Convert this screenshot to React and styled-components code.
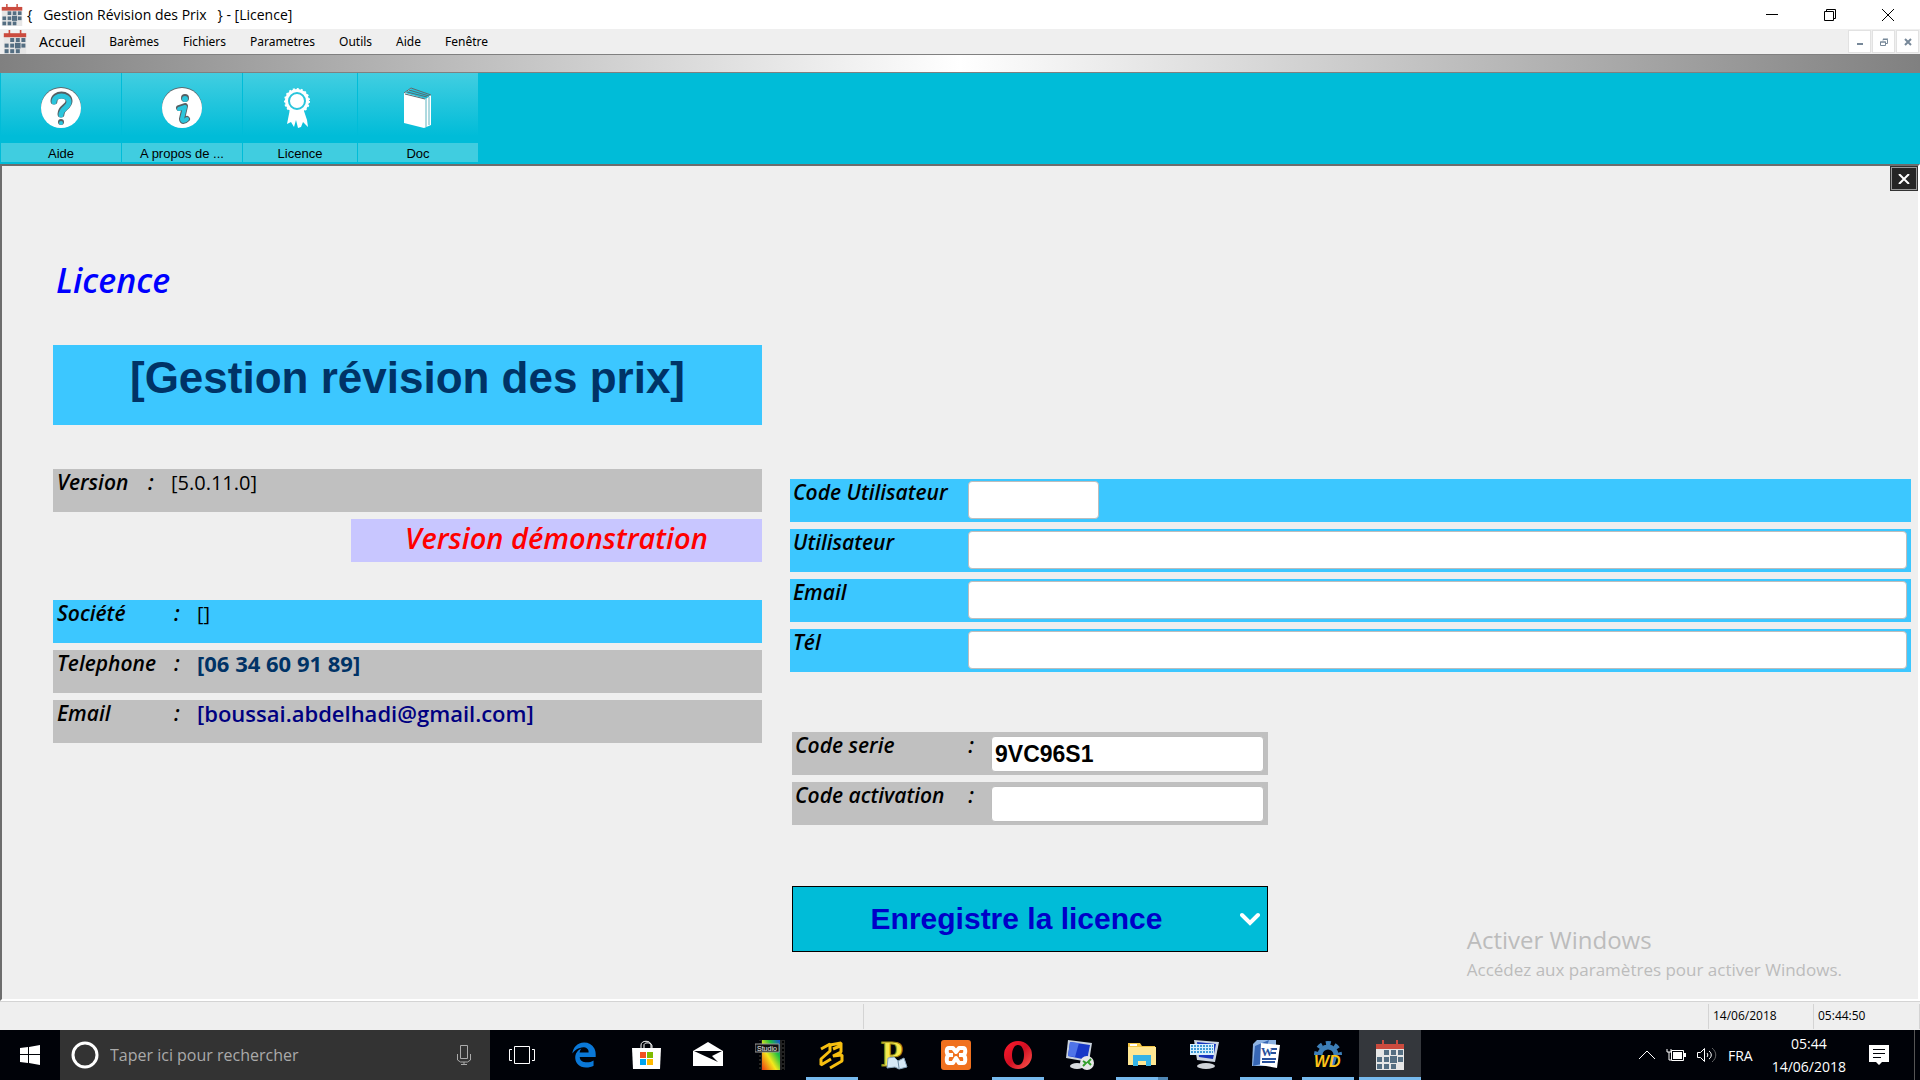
import React, { useState } from 'react'
import styled, { createGlobalStyle } from 'styled-components'
import { FaEdgeLegacy } from 'react-icons/fa'

const ui = '"Open Sans", "Noto Sans", sans-serif'
const arial = '"Liberation Sans", sans-serif'

const menus = ['Barèmes', 'Fichiers', 'Parametres', 'Outils', 'Aide', 'Fenêtre']

function CalendarIcon({ size }) {
  const days = [[8, 10], [15, 10], [22, 10], [1, 17], [8, 17], [22, 17], [1, 24], [8, 24], [15, 24]]
  return (
    <svg width={size} height={size} viewBox="-1 0 30 30" aria-hidden="true">
      <path d="M0 8h28v22H0z" fill="#e6e6e6" />
      <path d="M0 4h28v5H0z" fill="#cb4b3e" />
      <path d="M7 0v5M21 0v5" stroke="#cb4b3e" strokeWidth="2" />
      {days.map(([x, y]) => (
        <rect key={x + '-' + y} x={x} y={y} width="5" height="5" fill="#546e82" />
      ))}
      <path d="M14 16h7v7h-7z" fill="#546e82" />
    </svg>
  )
}

function HelpIcon() {
  return (
    <svg width="42" height="42" viewBox="0 0 42 42" aria-hidden="true">
      <circle cx="21" cy="20" r="20" fill="#5d6b70" />
      <circle cx="21" cy="21" r="20" fill="#fff" />
      <g fill="none" strokeLinecap="round">
        <path d="M14 14c0-8 15-8 15 0 0 6-8 6-8 13" stroke="#555f63" strokeWidth="7" />
        <path d="M14 15c0-8 15-8 15 0 0 6-8 6-8 13" stroke="#2bc5dc" strokeWidth="5" />
      </g>
      <circle cx="21" cy="35" r="4" fill="#fff" />
      <circle cx="21" cy="35" r="3" fill="#555f63" />
      <circle cx="21" cy="36" r="2" fill="#2bc5dc" />
    </svg>
  )
}

function InfoIcon() {
  return (
    <svg width="42" height="42" viewBox="0 0 42 42" aria-hidden="true">
      <circle cx="21" cy="20" r="20" fill="#5d6b70" />
      <circle cx="21" cy="21" r="20" fill="#fff" />
      <circle cx="24" cy="11" r="4" fill="#555f63" />
      <circle cx="24" cy="12" r="3" fill="#2bc5dc" />
      <g fill="none" strokeLinecap="round" strokeLinejoin="round">
        <path d="M18 21l6-2-3 13c0 3 3 2 5 0" stroke="#555f63" strokeWidth="6" />
        <path d="M18 22l6-2-3 12c0 3 3 2 5 0" stroke="#2bc5dc" strokeWidth="4" />
      </g>
    </svg>
  )
}

function RibbonIcon() {
  return (
    <svg width="42" height="42" viewBox="1 0 42 42" aria-hidden="true">
      <path d="M12 22L9 37l4-2 3 5 2-7 2 8 3-1 2-5 5 5-1-7-4-12z" fill="#fff" />
      <circle cx="19" cy="14" r="12" fill="#fff" stroke="#fff" strokeWidth="2" strokeDasharray="2 2" />
      <circle cx="19" cy="14" r="8" fill="#fff" stroke="#2bc5dc" strokeWidth="2" />
    </svg>
  )
}

function BookIcon() {
  return (
    <svg width="42" height="42" viewBox="0 0 42 42" aria-hidden="true">
      <path d="M7 6l7-5 20 7v30l-7 3L7 36z" fill="#fff" />
      <path d="M8 6l7-5 19 7-5 4z" fill="#25c3db" />
      <path d="M29 12v28M32 10v28" stroke="#5fb4c0" strokeWidth="1" />
      <path d="M7 6l7-5 20 7M8 7l20 5M10 5l20 5M12 3l20 6" stroke="#58696e" strokeWidth="1" fill="none" />
    </svg>
  )
}

const tools = [
  { text: 'Aide', icon: <HelpIcon />, width: 120 },
  { text: 'A propos de ...', icon: <InfoIcon />, width: 120 },
  { text: 'Licence', icon: <RibbonIcon />, width: 114 },
  { text: 'Doc', icon: <BookIcon />, width: 120 },
]

const taskIcons = [
  { name: 'Microsoft Edge', icon: <FaEdgeLegacy size={26} color="#0a78d7" /> },
  {
    name: 'Microsoft Store',
    icon: (
      <svg width="30" height="30" viewBox="0 0 30 30">
        <path d="M10 9V5c0-5 10-5 10 0v4M13 9V5c0-3 8-3 8 1v3" fill="none" stroke="#fff" strokeWidth="1" />
        <path d="M1 8h29l-1 21H2z" fill="#fff" />
        <path d="M9 12h6v6H9z" fill="#f25022" />
        <path d="M16 12h6v6h-6z" fill="#7fba00" />
        <path d="M9 19h6v6H9z" fill="#00a4ef" />
        <path d="M16 19h6v6h-6z" fill="#ffb900" />
      </svg>
    ),
  },
  {
    name: 'Courrier',
    icon: (
      <svg width="30" height="30" viewBox="0 0 30 30">
        <path d="M0 11L15 2l15 9v15H0z" fill="#fff" />
        <path d="M1 11l28 0-10 5 6 6-11-5z" fill="#000208" />
      </svg>
    ),
  },
  {
    name: 'Studio',
    icon: (
      <svg width="30" height="30" viewBox="0 0 30 30">
        <defs>
          <linearGradient id="film" x1="1" y1="0" x2="0" y2="1">
            <stop offset="0" stopColor="#1747d8" />
            <stop offset="0.3" stopColor="#20c040" />
            <stop offset="0.6" stopColor="#f4e81c" />
            <stop offset="1" stopColor="#ee3a10" />
          </linearGradient>
        </defs>
        <path d="M4 0h26v30H4z" fill="#222" />
        <path d="M7 0h18v30H7z" fill="url(#film)" />
        <path d="M5 1v29M28 1v29" stroke="#000" strokeWidth="2" strokeDasharray="2 2" />
        <path d="M0 4h24v8H0z" fill="#111" stroke="#999" />
        <text x="2" y="11" fontSize="7" fill="#eee" fontFamily="Liberation Sans, sans-serif">Studio</text>
      </svg>
    ),
  },
  {
    name: 'PC SOFT 23',
    running: true,
    icon: (
      <svg width="30" height="30" viewBox="0 0 30 30">
        <path d="M4 9l9-5v7L4 19v6l10-6" fill="none" stroke="#f7bf10" strokeWidth="3" strokeLinejoin="bevel" />
        <path d="M13 5l11-2v9l-8 4 9-1v6L13 28M16 9l7-3" fill="none" stroke="#f7bf10" strokeWidth="3" strokeLinejoin="bevel" />
      </svg>
    ),
  },
  {
    name: 'Lexique',
    icon: (
      <svg width="30" height="40" viewBox="0 0 30 40">
        <text x="2" y="31" fontSize="36" fontWeight="700" fill="#f5e84c" stroke="#9b8a12" strokeWidth="1" fontFamily="Liberation Serif, serif">P</text>
        <path d="M9 23l6-1 4 4 6-3 3 9-8 2-4-2-8 1z" fill="#d6e9f6" stroke="#8aa8bd" />
        <path d="M19 26l1 7" stroke="#6c8ba3" />
      </svg>
    ),
  },
  {
    name: 'XAMPP',
    icon: (
      <svg width="30" height="30" viewBox="0 0 30 30">
        <rect width="30" height="30" rx="3" fill="#f0711f" />
        <g fill="none" stroke="#fff" strokeWidth="4" strokeLinejoin="round">
          <path d="M8 8h4l3 4 3-4h4c3 0 3 6 0 7 3 1 3 8 0 8h-4l-3-5-3 5H8c-3 0-3-7 0-8-3-1-3-7 0-7z" />
          <path d="M8 15h4M18 15h4" />
        </g>
      </svg>
    ),
  },
  {
    name: 'Opera',
    running: true,
    icon: (
      <svg width="30" height="30" viewBox="0 0 30 30">
        <defs>
          <linearGradient id="opera" x1="0" y1="0" x2="1" y2="1">
            <stop offset="0" stopColor="#ff1b2d" />
            <stop offset="0.5" stopColor="#d20f22" />
            <stop offset="1" stopColor="#ff5a4f" />
          </linearGradient>
        </defs>
        <path fillRule="evenodd" d="M15 1a14 14 0 1 0 0 28a14 14 0 1 0 0-28zM15 5c4 0 6 5 6 10s-2 10-6 10-6-5-6-10 2-10 6-10z" fill="url(#opera)" />
      </svg>
    ),
  },
  {
    name: 'Bureau à distance',
    icon: (
      <svg width="30" height="30" viewBox="0 0 30 30">
        <ellipse cx="12" cy="26" rx="7" ry="3" fill="#d7dade" />
        <path d="M3 0l24 3-3 19-23-4z" fill="#c9d2dd" />
        <path d="M5 2l20 3-3 15-19-4z" fill="#1838c8" />
        <path d="M5 2l9 1-4 14-7-1z" fill="#4f74e8" />
        <circle cx="22" cy="23" r="7" fill="#e8e8e8" />
        <path d="M18 21l3 2-3 3M26 19l-3 3 3 3" fill="none" stroke="#35a12c" strokeWidth="2" />
      </svg>
    ),
  },
  {
    name: 'Explorateur de fichiers',
    running: true,
    stacked: true,
    icon: (
      <svg width="30" height="30" viewBox="0 0 30 30">
        <path d="M1 3h12l2 3h13v19H1z" fill="#f2c545" />
        <path d="M1 7h28v18H1z" fill="#ffe793" />
        <path d="M3 4h7v2H3z" fill="#fff" />
        <path d="M6 15h18v11h-5v-5h-8v5H6z" fill="#35b3e6" />
      </svg>
    ),
  },
  {
    name: 'Clavier visuel',
    icon: (
      <svg width="30" height="30" viewBox="0 0 30 30">
        <ellipse cx="17" cy="26" rx="9" ry="3" fill="#cfd3d8" />
        <path d="M5 0l25 2-4 20-18-2z" fill="#ccd5e0" />
        <path d="M8 2l19 2-3 15-14-2z" fill="#1735be" />
        <path d="M1 4h24v11H1z" fill="#d9effc" />
        <path d="M2 6h22M2 9h22M2 12h22" stroke="#3f9ad8" strokeWidth="2" strokeDasharray="2 1" />
      </svg>
    ),
  },
  {
    name: 'Word',
    running: true,
    icon: (
      <svg width="30" height="30" viewBox="0 0 30 30">
        <path d="M2 4l4-4h19v26H1z" fill="#8eb3e2" />
        <path d="M4 6l14-6-8 24-8 2z" fill="#3767b5" />
        <path d="M10 3l19 2-3 23-17-3z" fill="#fff" />
        <text x="10" y="16" fontSize="12" fontWeight="700" fill="#28519c" fontFamily="Liberation Serif, serif">W</text>
        <path d="M21 9h5M20 13h5M11 19h14M11 22h13" stroke="#28519c" strokeWidth="2" />
      </svg>
    ),
  },
  {
    name: 'WinDev',
    running: true,
    icon: (
      <svg width="30" height="30" viewBox="0 0 30 30">
        <circle cx="15" cy="15" r="8" fill="none" stroke="#3d7fb8" strokeWidth="5" />
        <circle cx="15" cy="15" r="12" fill="none" stroke="#3d7fb8" strokeWidth="4" strokeDasharray="5 4" />
        <path d="M0 15h30v15H0z" fill="#000208" />
        <path d="M19 17h5l-3 9h-4z" fill="#3d7fb8" />
        <text x="1" y="27" fontSize="16" fontWeight="700" fontStyle="italic" fill="#fcc419" fontFamily="Liberation Sans, sans-serif">WD</text>
      </svg>
    ),
  },
  { name: 'Gestion Révision des Prix', running: true, active: true, icon: <CalendarIcon size={30} /> },
]

function App() {
  const [user, setUser] = useState({ code: '', name: '', email: '', tel: '' })
  const [serie, setSerie] = useState('9VC96S1')
  const [activation, setActivation] = useState('')

  const change = (key) => (e) => setUser({ ...user, [key]: e.target.value })

  return (
    <Screen>
      <GlobalStyle />

      <TitleBar>
        <CalendarIcon size={22} />
        <TitleText>{'{   Gestion Révision des Prix   } - [Licence]'}</TitleText>
        <WindowButton aria-label="Réduire">
          <svg width="12" height="12"><path d="M0 5.5h12" stroke="#000" /></svg>
        </WindowButton>
        <WindowButton aria-label="Restaurer">
          <svg width="12" height="12" fill="none" stroke="#000">
            <path d="M.5 2.500h9v9h-9zM2.500 2.500v-2h9v9h-2" />
          </svg>
        </WindowButton>
        <WindowButton aria-label="Fermer">
          <svg width="12" height="12"><path d="M0 0l12 12M12 0L0 12" stroke="#000" /></svg>
        </WindowButton>
      </TitleBar>

      <MenuBar>
        <CalendarIcon size={24} />
        <MenuItem $large>Accueil</MenuItem>
        {menus.map((text) => <MenuItem key={text}>{text}</MenuItem>)}
        <MdiButtons>
          <MdiButton aria-label="Réduire la fenêtre">
            <svg width="8" height="8"><path d="M1 6h6" stroke="#778899" strokeWidth="2" /></svg>
          </MdiButton>
          <MdiButton aria-label="Restaurer la fenêtre">
            <svg width="8" height="8" fill="none" stroke="#778899">
              <path d="M.5 4h5v3.500h-5zM3 2.500v-1h4.500v4h-2M3 1h5M0 4h6" />
            </svg>
          </MdiButton>
          <MdiButton aria-label="Fermer la fenêtre">
            <svg width="8" height="8"><path d="M1 1l6 6M7 1L1 7" stroke="#778899" strokeWidth="2" /></svg>
          </MdiButton>
        </MdiButtons>
      </MenuBar>

      <Band />

      <Toolbar>
        {tools.map((tool) => (
          <Tool key={tool.text} $width={tool.width}>
            <ToolIcon>{tool.icon}</ToolIcon>
            <ToolText>{tool.text}</ToolText>
          </Tool>
        ))}
      </Toolbar>

      <Workspace>
        <CloseButton aria-label="Fermer">
          <svg width="12" height="10"><path d="M1 0l10 10M11 0L1 10" stroke="#fff" strokeWidth="2" /></svg>
        </CloseButton>
        <Heading>Licence</Heading>

        <Columns>
          <div>
            <Product>[Gestion révision des prix]</Product>
            <InfoRow $label={91} $colon={23}>
              <b>Version</b><b>:</b><Value>[5.0.11.0]</Value>
            </InfoRow>
            <Demo>Version démonstration</Demo>
            <InfoRow $blue>
              <b>Société</b><b>:</b><Value>[]</Value>
            </InfoRow>
            <InfoRow>
              <b>Telephone</b><b>:</b><Value $color="#003366" $weight={700}>[06 34 60 91 89]</Value>
            </InfoRow>
            <InfoRow>
              <b>Email</b><b>:</b><Value $color="#000080" $weight={600}>[boussai.abdelhadi@gmail.com]</Value>
            </InfoRow>
          </div>

          <Forms>
            <Field>
              <label htmlFor="code">Code Utilisateur</label>
              <Input id="code" $short value={user.code} onChange={change('code')} />
            </Field>
            <Field>
              <label htmlFor="name">Utilisateur</label>
              <Input id="name" value={user.name} onChange={change('name')} />
            </Field>
            <Field>
              <label htmlFor="email">Email</label>
              <Input id="email" type="email" value={user.email} onChange={change('email')} />
            </Field>
            <Field>
              <label htmlFor="tel">Tél</label>
              <Input id="tel" type="tel" value={user.tel} onChange={change('tel')} />
            </Field>

            <Activation>
              <CodeField>
                <label htmlFor="serie"><span>Code serie</span><span>:</span></label>
                <Input id="serie" value={serie} onChange={(e) => setSerie(e.target.value)} />
              </CodeField>
              <CodeField>
                <label htmlFor="activation"><span>Code activation</span><span>:</span></label>
                <Input id="activation" value={activation} onChange={(e) => setActivation(e.target.value)} />
              </CodeField>
              <SaveButton>
                <span>Enregistre la licence</span>
                <svg width="20" height="14" fill="none" stroke="#fff" strokeWidth="4" strokeLinecap="round">
                  <path d="M2 3l8 8 8-8" />
                </svg>
              </SaveButton>
            </Activation>
          </Forms>
        </Columns>

        <Watermark>
          <strong>Activer Windows</strong>
          <span>Accédez aux paramètres pour activer Windows.</span>
        </Watermark>
      </Workspace>

      <StatusBar>
        <span />
        <span />
        <span>14/06/2018</span>
        <span>05:44:50</span>
      </StatusBar>

      <TaskBar>
        <StartButton aria-label="Démarrer">
          <svg width="20" height="20" fill="#fff">
            <path d="M0 3l8-1v7H0zM9 2l11-2v9H9zM0 10h8v8l-8-1zM9 10h11v10L9 18z" />
          </svg>
        </StartButton>
        <Search>
          <svg width="28" height="28" aria-hidden="true">
            <circle cx="14" cy="14" r="12" fill="none" stroke="#fff" strokeWidth="3" />
          </svg>
          <input aria-label="Rechercher" placeholder="Taper ici pour rechercher" />
          <svg width="16" height="22" fill="none" stroke="#aaa" aria-hidden="true">
            <path d="M4.500 1.500h7v13h-7zM1.500 10v6l3 2h7l3-2v-6M8 18v3M5 20.500h6" />
          </svg>
        </Search>
        <TaskView aria-label="Affichage des tâches">
          <svg width="26" height="20" fill="none" stroke="#fff">
            <path d="M5.500 1.500h15v17h-15zM3 4.500H.5v11H3M23 4.500h2.500v11H23" />
          </svg>
        </TaskView>
        {taskIcons.map((item) => (
          <TaskItem key={item.name} aria-label={item.name} $running={item.running} $active={item.active} $stacked={item.stacked}>
            {item.icon}
          </TaskItem>
        ))}

        <Tray>
          <svg width="18" height="10" fill="none" stroke="#fff"><path d="M1 9l8-8 8 8" /></svg>
          <svg width="20" height="14" fill="none" stroke="#fff">
            <path d="M5.500 2.500h12v10h-12zM1 1v3h4V1M3 4v8h2" />
            <path d="M7 4h9v7H7zM18 5h2v4h-2z" fill="#fff" stroke="none" />
          </svg>
          <svg width="22" height="18" fill="none" stroke="#fff">
            <path d="M1.500 6.500h3l4-4v13l-4-4h-3z" />
            <path d="M11 7c1 1 1 3 0 4M13 5c3 2 3 6 0 8" />
            <path d="M16 2c5 4 5 10 0 14" stroke="#666" />
          </svg>
          <span>FRA</span>
          <Clock>
            <span>05:44</span>
            <span>14/06/2018</span>
          </Clock>
          <svg width="20" height="20">
            <path d="M0 0h20v17h-7l-3 3-3-3H0z" fill="#fff" />
            <path d="M4 4.500h12M4 8.500h12M4 12.500h8" stroke="#000208" />
          </svg>
        </Tray>
      </TaskBar>
    </Screen>
  )
}

export default App

const GlobalStyle = createGlobalStyle`
  * {
    box-sizing: border-box;
  }
  body {
    margin: 0;
    background: #efefef;
    font-family: ${ui};
    color: #000;
  }
  button, input {
    font: inherit;
    color: inherit;
    border: 0;
    margin: 0;
    padding: 0;
    background: none;
  }
  svg {
    flex: none;
    display: block;
  }
`

const Screen = styled.div`
  display: flex;
  flex-direction: column;
  min-height: 100vh;
`

const TitleBar = styled.header`
  display: flex;
  align-items: center;
  height: 29px;
  padding: 0 3px 0 1px;
  background: #fff;
`

const TitleText = styled.span`
  flex: 1;
  margin-left: 4px;
  font-size: 14px;
  white-space: pre;
`

const WindowButton = styled.button`
  display: flex;
  align-items: center;
  justify-content: center;
  width: 58px;
  height: 29px;
`

const MenuBar = styled.nav`
  display: flex;
  align-items: center;
  height: 25px;
  padding-left: 3px;
  background: #efefef;
`

const MenuItem = styled.button`
  padding: 0 12px;
  font-family: "Noto Sans", sans-serif;
  font-size: ${(p) => (p.$large ? '14px' : '12px')};
  line-height: 24px;
`

const MdiButtons = styled.div`
  display: flex;
  gap: 1px;
  margin-left: auto;
  padding-right: 1px;
`

const MdiButton = styled.button`
  display: flex;
  align-items: center;
  justify-content: center;
  width: 23px;
  height: 23px;
  background: #fff;
  border: 1px solid #e2e2e2;
`

const Band = styled.div`
  height: 19px;
  border: solid #808080;
  border-width: 1px 0;
  background: linear-gradient(90deg, #808080, #fff 50%, #808080);
`

const Toolbar = styled.div`
  display: flex;
  gap: 1px;
  height: 91px;
  padding: 0 1px 2px;
  background: #00bcd8;
`

const Tool = styled.button`
  display: flex;
  flex-direction: column;
  width: ${(p) => p.$width}px;
`

const ToolIcon = styled.span`
  display: flex;
  flex: 1;
  width: 100%;
  align-items: center;
  justify-content: center;
  background: linear-gradient(#42cee1, #00bcd8 90%);
`

const ToolText = styled.span`
  width: 100%;
  height: 19px;
  font-family: ${arial};
  font-size: 13px;
  line-height: 22px;
  text-align: center;
  background: #40cde0;
`

const Workspace = styled.main`
  position: relative;
  flex: 1;
  padding: 90px 7px 40px 51px;
  background: #efefef;
  border: 2px solid #6d6d6d;
  border-right-color: #fff;
  border-bottom-color: #fff;
`

const CloseButton = styled.button`
  position: absolute;
  top: 0;
  right: 0;
  display: flex;
  align-items: center;
  justify-content: center;
  width: 28px;
  height: 25px;
  background: #252525;
  border: 2px solid #999;
  outline: 1px solid #333;
  outline-offset: -1px;
`

const Heading = styled.h1`
  margin: 0 0 41px;
  padding-left: 3px;
  font-size: 34px;
  font-style: italic;
  font-weight: 600;
  line-height: 48px;
  color: #0000ff;
`

const Columns = styled.div`
  display: grid;
  grid-template-columns: minmax(0, 709fr) minmax(0, 1121fr);
  gap: 28px;
`

const Product = styled.h2`
  height: 80px;
  margin: 0 0 44px;
  font-family: "Liberation Sans Narrow", "Liberation Sans", sans-serif;
  font-size: 44px;
  font-weight: 700;
  line-height: 66px;
  text-align: center;
  color: #003366;
  background: #3cc7ff;
`

const InfoRow = styled.div`
  display: grid;
  grid-template-columns: ${(p) => p.$label || 117}px ${(p) => p.$colon || 23}px 1fr;
  height: 43px;
  margin-bottom: 7px;
  padding-left: 4px;
  font-size: 21px;
  line-height: 27px;
  background: ${(p) => (p.$blue ? '#3cc7ff' : '#c0c0c0')};
  b {
    font-style: italic;
    font-weight: 600;
  }
`

const Value = styled.span`
  color: ${(p) => p.$color || '#000'};
  font-size: ${(p) => (p.$color ? '22px' : '20px')};
  font-weight: ${(p) => p.$weight || 400};
`

const Demo = styled.p`
  width: 58%;
  height: 43px;
  margin: 0 0 38px auto;
  font-size: 29px;
  font-style: italic;
  font-weight: 600;
  line-height: 38px;
  text-align: center;
  color: #ff0000;
  background: #c8c6ff;
`

const Forms = styled.form`
  padding-top: 134px;
`

const Field = styled.div`
  display: flex;
  height: 43px;
  margin-bottom: 7px;
  padding: 2px 4px 3px 3px;
  background: #3cc7ff;
  label {
    width: 175px;
    font-size: 21px;
    font-style: italic;
    font-weight: 600;
    line-height: 23px;
  }
`

const Input = styled.input`
  flex: ${(p) => (p.$short ? '0 0 131px' : '1')};
  min-width: 0;
  padding: 0 3px;
  font-family: ${arial};
  font-size: 23px;
  font-weight: 700;
  background: #fff;
  border: 1px solid #bdbdbd;
  border-radius: 4px;
`

const Activation = styled.div`
  width: 476px;
  max-width: 100%;
  margin: 60px 0 0 2px;
`

const CodeField = styled(Field)`
  padding: 4px 4px 3px 3px;
  background: #c0c0c0;
  label {
    display: flex;
    justify-content: space-between;
    width: 196px;
    padding-right: 17px;
    line-height: 19px;
  }
`

const SaveButton = styled.button.attrs({ type: 'button' })`
  display: flex;
  align-items: center;
  width: 100%;
  height: 66px;
  margin-top: 61px;
  padding-right: 7px;
  font-family: ${arial};
  font-size: 30px;
  font-weight: 700;
  color: #0000c8;
  background: #00bcd8;
  border: 1px solid #000;
  span {
    flex: 1;
  }
`

const Watermark = styled.div`
  position: absolute;
  right: 76px;
  bottom: 16px;
  display: flex;
  flex-direction: column;
  color: #bcbcbc;
  pointer-events: none;
  strong {
    font-size: 24px;
    font-weight: 400;
    line-height: 32px;
  }
  span {
    font-size: 17px;
    line-height: 27px;
  }
`

const StatusBar = styled.footer`
  display: grid;
  grid-template-columns: 864fr 845fr 105px 106px;
  height: 29px;
  padding: 2px 0 1px;
  border-top: 1px solid #d4d4d4;
  background: #efefef;
  span {
    padding-left: 4px;
    font-size: 12px;
    line-height: 24px;
    border-right: 1px solid #d4d4d4;
  }
`

const TaskBar = styled.div`
  display: flex;
  height: 50px;
  color: #fff;
  background: #000208;
`

const StartButton = styled.button`
  display: flex;
  align-items: center;
  justify-content: center;
  width: 60px;
`

const Search = styled.div`
  display: flex;
  align-items: center;
  width: 430px;
  padding: 0 18px 0 11px;
  background: #333;
  input {
    flex: 1;
    min-width: 0;
    margin-left: 11px;
    font-size: 16px;
  }
  input::placeholder {
    color: #aaa;
    opacity: 1;
  }
`

const TaskView = styled(StartButton)`
  width: 63px;
`

const TaskItem = styled.button`
  position: relative;
  display: flex;
  align-items: center;
  justify-content: center;
  width: 62px;
  background: ${(p) => (p.$active ? '#34373c' : 'none')};
  &::after {
    content: '';
    position: absolute;
    bottom: 0;
    left: ${(p) => (p.$active ? '0' : '5px')};
    right: ${(p) => (p.$active ? '0' : '5px')};
    height: 3px;
    display: ${(p) => (p.$running ? 'block' : 'none')};
    background: ${(p) => (p.$stacked ? 'linear-gradient(90deg, #76b9ed 80%, #4f86b3 80%)' : '#76b9ed')};
  }
`

const Tray = styled.div`
  display: flex;
  align-items: center;
  gap: 10px;
  margin: 0 5px 0 auto;
  padding-right: 25px;
  border-right: 1px solid #555;
  font-size: 14px;
`

const Clock = styled.div`
  display: flex;
  flex-direction: column;
  margin: 0 13px 0 9px;
  line-height: 23px;
  text-align: center;
`
